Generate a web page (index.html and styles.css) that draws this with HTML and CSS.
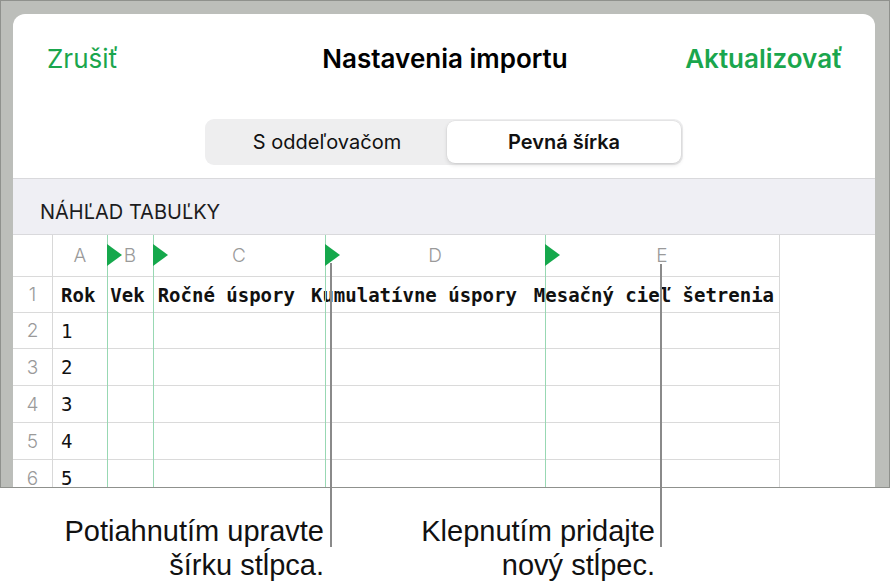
FILE: index.html
```html
<!DOCTYPE html>
<html lang="sk">
<head>
    <meta charset="UTF-8">
    <meta name="viewport" content="width=device-width, initial-scale=1.0">
    <title>Nastavenia importu</title>
    <link rel="stylesheet" href="styles.css">
</head>
<body>
    <div class="page">
        <div class="frame">
            <div class="sheet">
                <!-- navigácia -->
                <header class="nav">
                    <div class="nav-cancel">Zrušiť</div>
                    <div class="nav-title">Nastavenia importu</div>
                    <div class="nav-update">Aktualizovať</div>
                </header>

                <!-- prepínač -->
                <div class="segmented">
                    <div class="segment">S oddeľovačom</div>
                    <div class="segment active">Pevná šírka</div>
                </div>

                <div class="section-title">NÁHĽAD TABUĽKY</div>

                <!-- náhľad tabuľky -->
                <div class="table">
                    <div class="rownum head"></div>
                    <div class="col-head">A</div>
                    <div class="col-head">B</div>
                    <div class="col-head">C</div>
                    <div class="col-head">D</div>
                    <div class="col-head last">E</div>

                    <div class="rownum">1</div>
                    <div class="cell heading-line">
                        <span>Rok</span>
                        <span class="gap-1">Vek</span>
                        <span class="gap-2">Ročné úspory</span>
                        <span class="gap-3">Kumulatívne úspory</span>
                        <span class="gap-4">Mesačný cieľ šetrenia</span>
                    </div>

                    <div class="rownum">2</div>
                    <div class="cell value">1</div>
                    <div class="cell"></div>
                    <div class="cell"></div>
                    <div class="cell"></div>
                    <div class="cell last"></div>

                    <div class="rownum">3</div>
                    <div class="cell value">2</div>
                    <div class="cell"></div>
                    <div class="cell"></div>
                    <div class="cell"></div>
                    <div class="cell last"></div>

                    <div class="rownum">4</div>
                    <div class="cell value">3</div>
                    <div class="cell"></div>
                    <div class="cell"></div>
                    <div class="cell"></div>
                    <div class="cell last"></div>

                    <div class="rownum">5</div>
                    <div class="cell value">4</div>
                    <div class="cell"></div>
                    <div class="cell"></div>
                    <div class="cell"></div>
                    <div class="cell last"></div>

                    <div class="rownum">6</div>
                    <div class="cell value">5</div>
                    <div class="cell"></div>
                    <div class="cell"></div>
                    <div class="cell"></div>
                    <div class="cell last"></div>
                </div>

                <!-- zarážky šírky stĺpcov -->
                <div class="guide guide-b"></div>
                <div class="guide guide-c"></div>
                <div class="guide guide-d"></div>
                <div class="guide guide-e"></div>
            </div>
        </div>

        <!-- popisky -->
        <div class="callouts">
            <p class="callout">Potiahnutím upravte<br>šírku stĺpca.</p>
            <p class="callout">Klepnutím pridajte<br>nový stĺpec.</p>
        </div>
        <div class="pointer pointer-drag"></div>
        <div class="pointer pointer-add"></div>
    </div>
</body>
</html>
```

FILE: styles.css
```css
* {
    margin: 0;
    padding: 0;
    box-sizing: border-box;
}

body {
    background-color: #ffffff;
    color: #111111;
    font-family: 'Inter', 'Noto Sans', sans-serif;
}

.page {
    position: relative;
    width: 891px;
}

/* rám obrazovky */
.frame {
    width: 890px;
    height: 488px;
    padding: 13px 14px 0 12px;
    background-color: #bcbeba;
    border: 1px solid #8f918d;
    overflow: hidden;
}

.sheet {
    position: relative;
    height: 100%;
    background-color: #ffffff;
    border-radius: 12px 12px 0 0;
    overflow: hidden;
}

/* navigácia */
.nav {
    display: grid;
    grid-template-columns: 1fr auto 1fr;
    align-items: center;
    padding: 29px 32px 0 34px;
    font-size: 26px;
    line-height: 32px;
}

.nav-cancel {
    color: #1aa64d;
}

.nav-title {
    font-weight: 600;
    color: #000000;
}

.nav-update {
    justify-self: end;
    color: #1aa64d;
    font-weight: 600;
}

/* prepínač */
.segmented {
    display: grid;
    grid-template-columns: 240px 234px;
    width: 478px;
    height: 46px;
    margin: 44px auto 13px;
    padding: 2px;
    background-color: #eeeeef;
    border-radius: 9px;
    font-size: 20px;
}

.segment {
    display: flex;
    align-items: center;
    justify-content: center;
    border-radius: 8px;
}

.segment.active {
    background-color: #ffffff;
    font-weight: 600;
    box-shadow: 0 2px 4px rgba(0, 0, 0, 0.12), 0 0 0 0.5px rgba(0, 0, 0, 0.06);
}

.section-title {
    height: 57px;
    padding: 21px 0 0 27px;
    background-color: #efeff4;
    border-top: 1px solid #d9d9dc;
    border-bottom: 1px solid #d9d9dc;
    font-size: 20px;
    line-height: 24px;
    color: #1c1c1e;
}

/* tabuľka */
.table {
    display: grid;
    grid-template-columns: 40px 54px 46px 172px 220px 235px;
    grid-template-rows: 42px 36px 36px 37px 37px 37px 37px;
    width: 767px;
}

.rownum,
.col-head,
.cell {
    display: flex;
    align-items: center;
    border-bottom: 1px solid #dadada;
}

.rownum {
    justify-content: center;
    border-right: 1px solid #d8d8d8;
    font-size: 19px;
    font-weight: 300;
    color: #9a9a9a;
}

.col-head {
    justify-content: center;
    font-size: 19px;
    font-weight: 300;
    color: #9a9a9a;
}

.last {
    border-right: 1px solid #d8d8d8;
}

.cell.value {
    padding-left: 8px;
    font-family: 'DejaVu Sans Mono', 'Liberation Mono', monospace;
    font-size: 19px;
}

.heading-line {
    grid-column: span 5;
    padding-left: 8px;
    border-right: 1px solid #d8d8d8;
    font-family: 'DejaVu Sans Mono', 'Liberation Mono', monospace;
    font-size: 19px;
    font-weight: bold;
    white-space: nowrap;
}

.gap-1 { margin-left: 15px; }
.gap-2 { margin-left: 13px; }
.gap-3 { margin-left: 16px; }
.gap-4 { margin-left: 17px; }

/* zelené zarážky */
.guide {
    position: absolute;
    top: 221px;
    bottom: 0;
    width: 1px;
    background-color: #98d8b3;
}

.guide::before {
    content: '';
    position: absolute;
    top: 9px;
    left: 0;
    border-left: 15px solid #15a84c;
    border-top: 11px solid transparent;
    border-bottom: 11px solid transparent;
}

.guide-b { left: 94px; }
.guide-c { left: 140px; }
.guide-d { left: 312px; }
.guide-e { left: 532px; }

/* popisky */
.callouts {
    display: grid;
    grid-template-columns: 324px 331px;
    margin-top: 26px;
    font-family: 'Liberation Sans', Arial, sans-serif;
    font-size: 29px;
    line-height: 34px;
    color: #111111;
}

.callout {
    text-align: right;
}

.pointer {
    position: absolute;
    width: 2px;
    background-color: #8a8a8a;
}

.pointer-drag {
    left: 330px;
    top: 263px;
    height: 284px;
}

.pointer-add {
    left: 660px;
    top: 264px;
    height: 283px;
}
```
